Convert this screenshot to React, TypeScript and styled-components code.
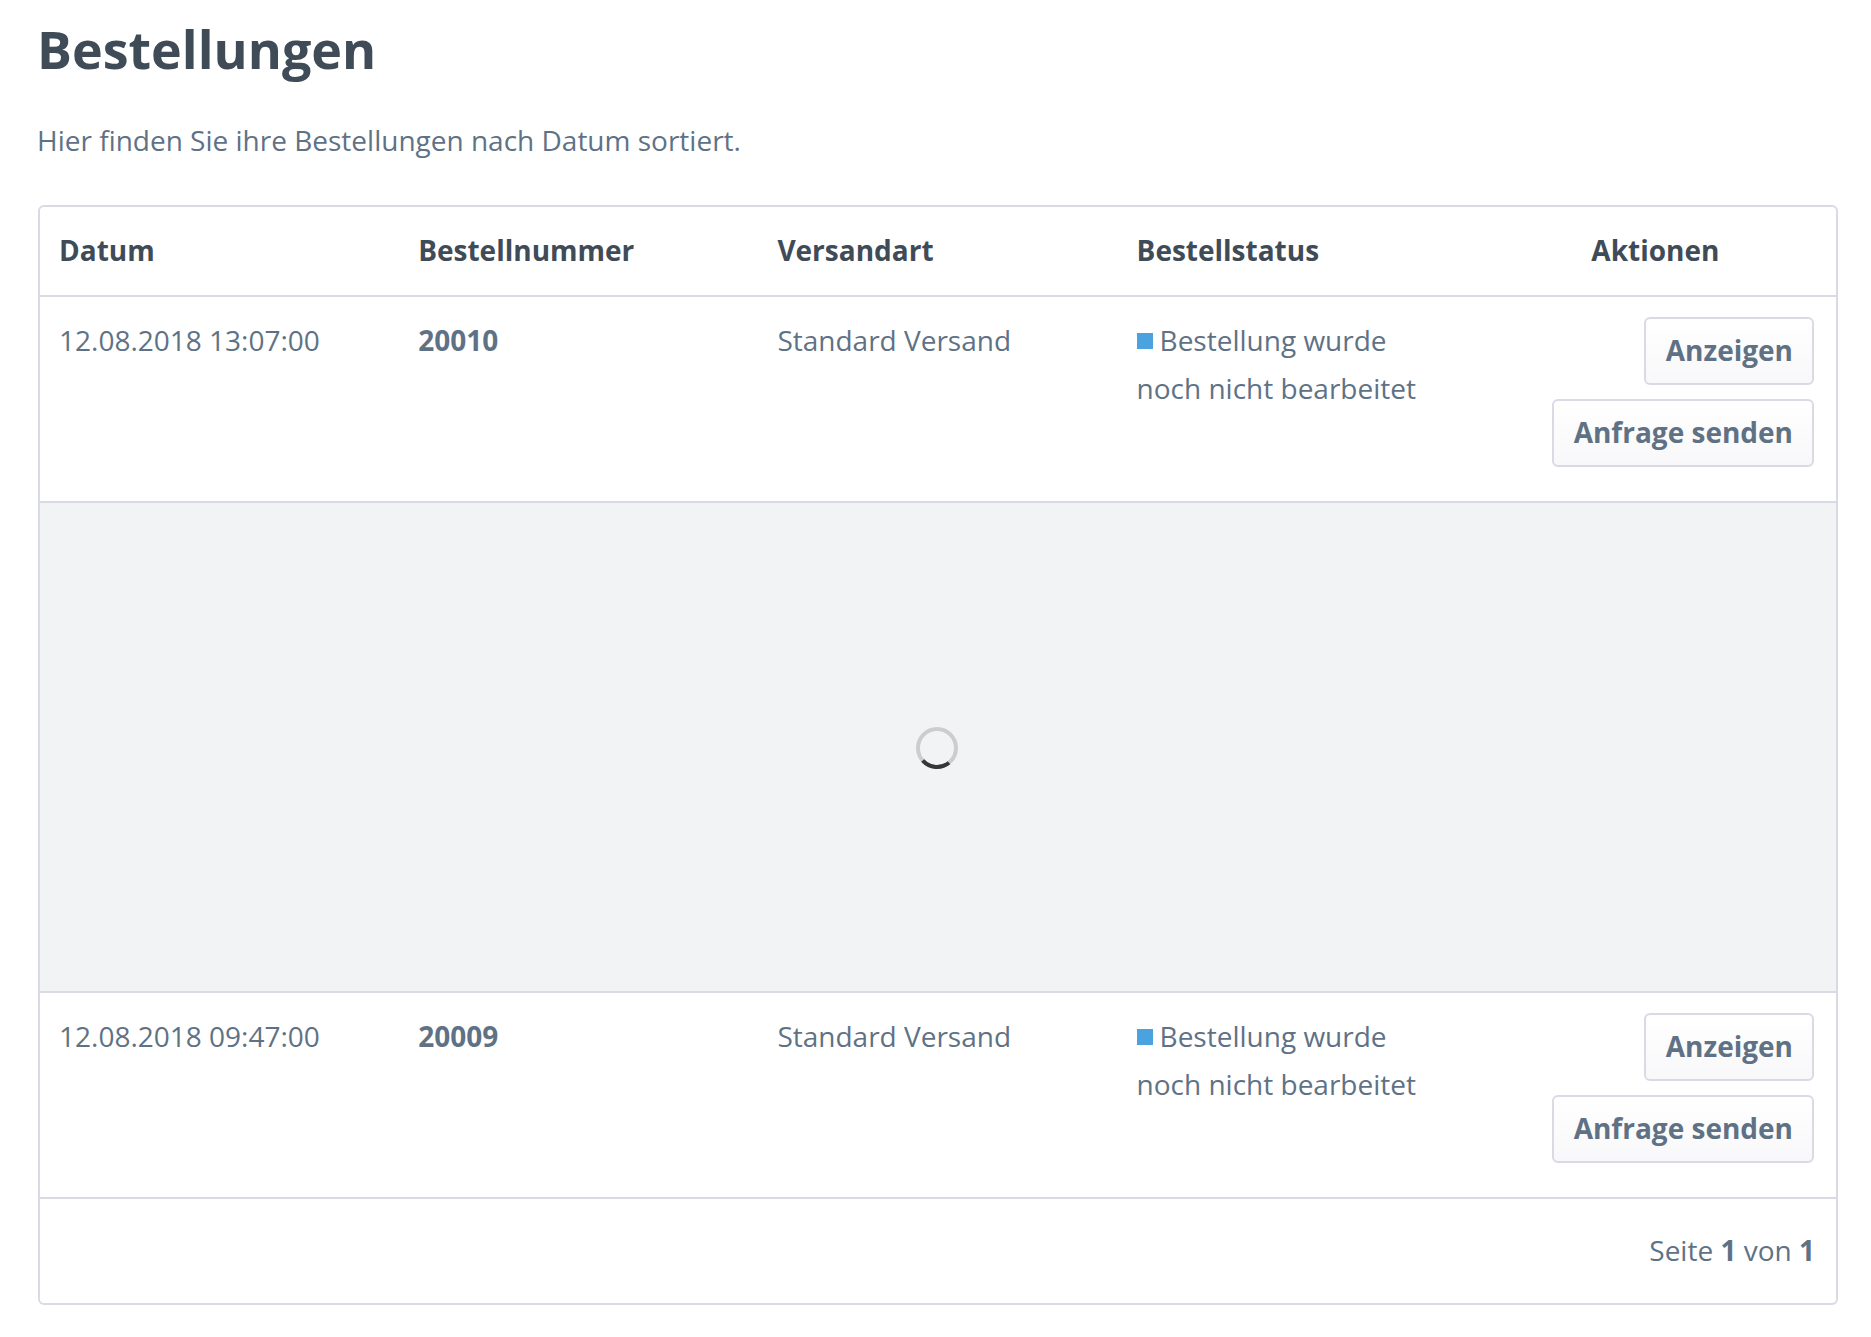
import React from "react";
import styled, { createGlobalStyle } from "styled-components";

const color = {
  heading: "#3f4c58",
  text: "#5f7285",
  border: "#dadae5",
  loading: "#f1f3f5",
  open: "#4aa3df",
};

const GlobalStyle = createGlobalStyle`
  *, *::before, *::after {
    box-sizing: border-box;
  }

  body {
    margin: 0;
    background: #fff;
    color: ${color.text};
    font-family: "Open Sans", "Noto Sans", sans-serif;
    font-size: 28px;
    line-height: 48px;
    -webkit-font-smoothing: antialiased;
  }
`;

const Page = styled.main`
  padding: 21px 33px 32px 37px;
`;

const Title = styled.h1`
  margin: 0;
  color: ${color.heading};
  font-size: 52px;
  font-weight: 700;
  line-height: 56px;
`;

const Intro = styled.p`
  margin: 39px 0 41px;
`;

const Panel = styled.section`
  margin-left: 1px;
  border: 2px solid ${color.border};
  border-radius: 6px;
  overflow: hidden;
`;

const OrderTable = styled.table`
  width: 100%;
  table-layout: fixed;
  border-collapse: separate;
  border-spacing: 0;
`;

const HeadCell = styled.th<{ $align?: "left" | "center" }>`
  padding: 19px 21px 21px 19px;
  border-bottom: 2px solid ${color.border};
  color: ${color.heading};
  font-weight: 700;
  text-align: ${({ $align = "left" }) => $align};
`;

const Cell = styled.td`
  padding: 19px 22px 21px 19px;
  border-bottom: 2px solid ${color.border};
  vertical-align: top;
`;

const LoadingCell = styled.td`
  height: 490px;
  padding: 2px 2px 0 0;
  border-bottom: 2px solid ${color.border};
  background: ${color.loading};
`;

const LoadingArea = styled.div`
  display: flex;
  justify-content: center;
`;

const Spinner = styled.svg`
  display: block;
  width: 42px;
  height: 42px;
`;

const StatusMark = styled.span`
  display: inline-block;
  width: 16px;
  height: 16px;
  margin-right: 7px;
  background: ${color.open};
  vertical-align: 2px;
`;

const Actions = styled.div`
  display: flex;
  flex-direction: column;
  align-items: flex-end;
`;

const ActionButton = styled.button`
  margin: 1px 0 13px;
  padding: 0 19px 2px 20px;
  border: 2px solid ${color.border};
  border-radius: 6px;
  background: linear-gradient(to bottom, #fff 0%, #f8f8fa 100%);
  color: ${color.text};
  font: inherit;
  font-weight: 700;
  line-height: 62px;
  white-space: nowrap;
  cursor: pointer;
`;

const Paging = styled.footer`
  padding: 27px 21px 29px;
  text-align: right;
`;

interface Order {
  date: string;
  number: string;
  dispatch: string;
  status: string;
}

const orders: Order[] = [
  {
    date: "12.08.2018 13:07:00",
    number: "20010",
    dispatch: "Standard Versand",
    status: "Bestellung wurde noch nicht bearbeitet",
  },
  {
    date: "12.08.2018 09:47:00",
    number: "20009",
    dispatch: "Standard Versand",
    status: "Bestellung wurde noch nicht bearbeitet",
  },
];

function OrderRow({ order }: { order: Order }) {
  return (
    <tr>
      <Cell>{order.date}</Cell>
      <Cell>
        <strong>{order.number}</strong>
      </Cell>
      <Cell>{order.dispatch}</Cell>
      <Cell>
        <StatusMark />
        {order.status}
      </Cell>
      <Cell>
        <Actions>
          <ActionButton type="button">Anzeigen</ActionButton>
          <ActionButton type="button">Anfrage senden</ActionButton>
        </Actions>
      </Cell>
    </tr>
  );
}

function LoadingRow() {
  return (
    <tr>
      <LoadingCell colSpan={5}>
        <LoadingArea>
          <Spinner viewBox="0 0 42 42" fill="none" strokeWidth="4" aria-hidden="true">
            <circle cx="21" cy="21" r="19" stroke="#cccdcf" />
            <path d="M33 35.7A19 19 0 0 1 6.7 33.5" stroke="#363636" />
          </Spinner>
        </LoadingArea>
      </LoadingCell>
    </tr>
  );
}

export default function App() {
  return (
    <>
      <GlobalStyle />
      <Page>
        <Title>Bestellungen</Title>
        <Intro>Hier finden Sie ihre Bestellungen nach Datum sortiert.</Intro>
        <Panel>
          <OrderTable>
            <thead>
              <tr>
                <HeadCell scope="col">Datum</HeadCell>
                <HeadCell scope="col">Bestellnummer</HeadCell>
                <HeadCell scope="col">Versandart</HeadCell>
                <HeadCell scope="col">Bestellstatus</HeadCell>
                <HeadCell scope="col" $align="center">
                  Aktionen
                </HeadCell>
              </tr>
            </thead>
            <tbody>
              <OrderRow order={orders[0]} />
              <LoadingRow />
              <OrderRow order={orders[1]} />
            </tbody>
          </OrderTable>
          <Paging>
            Seite <strong>1</strong> von <strong>1</strong>
          </Paging>
        </Panel>
      </Page>
    </>
  );
}
